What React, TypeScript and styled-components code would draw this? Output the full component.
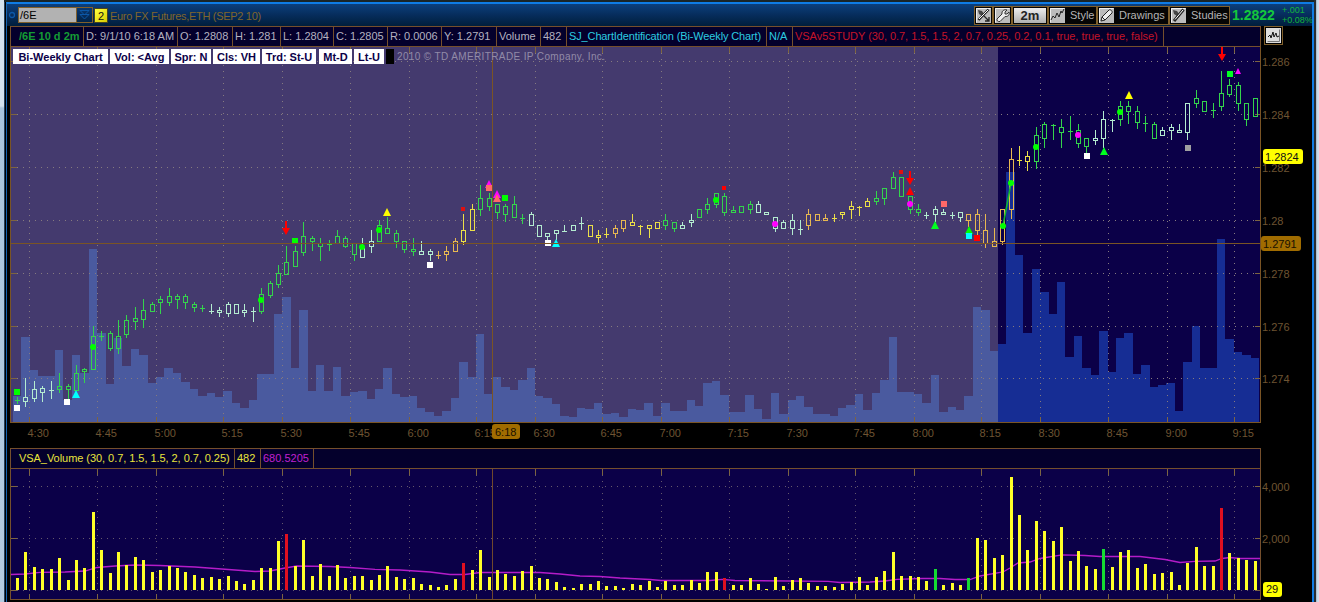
import React from "react"
import styled, { createGlobalStyle } from "styled-components"

const GlobalStyle = createGlobalStyle`
  html, body {
    margin: 0;
    background: #000;
    overflow: hidden;
  }
  body, text {
    font-family: "Liberation Sans", Arial, sans-serif;
    font-size: 11px;
  }
`

const Desktop = styled.div`
  display: grid;
  grid-template-columns: 4px 1fr 5px;
  width: 1319px;
  height: 602px;
  box-sizing: border-box;
  overflow: hidden;
`

const LeftEdge = styled.div`
  background: linear-gradient(#d4e2ee 0px, #d4e2ee 106px, #a9c4dc 108px, #b4cbe0 100%);
`

const RightEdge = styled.div`
  background: linear-gradient(90deg, #282c30 0px, #282c30 2px, #93a9c0 2px, #c4d6e6 3px, #d2e0ee 5px);
`

const Win = styled.div`
  display: flex;
  flex-direction: column;
  background: #000;
  border-top: 2px solid #182428;
  box-shadow: inset 1px 0 #24405c;
  padding-left: 2px;
`

const Inner = styled.div`
  border-top: 2px solid #0f7ce4;
  border-left: 1px solid #1464b4;
  border-right: 2px solid #0f7ce4;
  height: 598px;
`

const TitleBar = styled.div`
  display: flex;
  align-items: center;
  height: 22px;
  padding-left: 1px;
  background: linear-gradient(#0c3f7c, #062d5c 50%, #001e3c);
`

const SymbolInput = styled.div`
  display: flex;
  align-items: center;
  width: 56px;
  height: 14px;
  margin-left: 2px;
  padding-left: 1px;
  border: 1px solid #80602c;
  background: #b2b2b2;
  color: #000;
`

const DropButton = styled.div`
  width: 15px;
  height: 14px;
  border: 1px solid #80602c;
  border-left: 0;
`

const LinkBadge = styled.div`
  width: 12px;
  height: 13px;
  margin-left: 1px;
  border: 1px solid #4a4520;
  background: linear-gradient(135deg, #ffff40, #d8cc00);
  color: #111;
  line-height: 14px;
  text-align: center;
`

const Instrument = styled.div`
  margin-left: 2px;
  padding-top: 2px;
  color: #80662c;
  letter-spacing: -0.3px;
`

const Tools = styled.div`
  display: flex;
  margin-left: auto;
`

const ToolButton = styled.div<{ $w: number }>`
  display: flex;
  align-items: center;
  box-sizing: border-box;
  width: ${p => p.$w}px;
  height: 19px;
  border: 1px solid #80602c;
  background: #050505;
  color: #b4b4b4;
  svg {
    display: block;
    flex: none;
  }
  span {
    margin-left: 4px;
    white-space: nowrap;
  }
`

const Period = styled.div`
  flex: 1;
  height: 15px;
  margin: 1px;
  background: linear-gradient(#eee, #b0b0b0);
  color: #222;
  font-size: 13px;
  font-weight: bold;
  line-height: 16px;
  text-align: center;
`

const LastPrice = styled.div`
  width: 50px;
  margin-left: 2px;
  color: #14c83c;
  font-size: 14px;
  font-weight: bold;
`

const Change = styled.div`
  width: 30px;
  color: #14b43c;
  font-size: 9px;
  line-height: 10px;
  white-space: nowrap;
`

const HeaderRow = styled.div`
  display: flex;
  height: 21px;
  padding-left: 3px;
`

const InfoBar = styled.div`
  display: flex;
  box-sizing: border-box;
  width: 1251px;
  height: 21px;
  border: 1px solid #754f2c;
  background: #04002c;
`

const Cell = styled.div<{ $w: number; $color?: string; $bold?: boolean; $pad?: number; $ls?: number }>`
  box-sizing: border-box;
  width: ${p => p.$w}px;
  padding-left: ${p => p.$pad ?? 2}px;
  border-right: 1px solid #754f2c;
  color: ${p => p.$color ?? "#b4b2c0"};
  font-weight: ${p => (p.$bold ? "bold" : "normal")};
  letter-spacing: ${p => p.$ls ?? 0}px;
  line-height: 19px;
  white-space: nowrap;
`

const CornerIcon = styled.div`
  width: 17px;
  height: 17px;
  margin-left: 3px;
  border: 1px solid #80602c;
`

const ChartArea = styled.div`
  position: relative;
  height: 401px;
  padding-left: 3px;
  svg {
    display: block;
  }
`

const LowerChart = styled(ChartArea)`
  height: 133px;
`

const Badges = styled.div`
  position: absolute;
  left: 6px;
  top: 2px;
  display: flex;
  align-items: center;
`

const Badge = styled.div<{ $w: number; $ml: number }>`
  width: ${p => p.$w}px;
  height: 15px;
  margin-left: ${p => p.$ml}px;
  background: #fff;
  color: #0b0048;
  font-weight: bold;
  line-height: 16px;
  text-align: center;
  white-space: nowrap;
`

const BlackBox = styled.div`
  width: 8px;
  height: 15px;
  margin-left: 2px;
  background: #000;
`

const Copyright = styled.div`
  margin-left: 3px;
  color: #928ba8;
  font-size: 10px;
  letter-spacing: 0.37px;
  white-space: nowrap;
`

const BROWN = "#754f2c"
const AXIS = "#6e5432"
const colors: Record<string, string> = {
  g: "#34d44c",
  w: "#b4ecd0",
  y: "#ece048",
  o: "#e8b850"
}

const barX = (i: number) => Math.round(17 + i * 8.42)
const edgeX = (i: number) => Math.round(12.9 + i * 8.42)

const volumes = [
  26, 85, 52, 46, 46, 72, 22, 67, 49, 173, 89, 38, 84, 56, 73, 67, 39, 45, 54, 49,
  40, 33, 26, 29, 25, 31, 19, 14, 22, 48, 48, 108, 125, 54, 112, 31, 57, 31, 55, 26,
  30, 31, 23, 33, 54, 28, 25, 26, 14, 10, 6, 11, 24, 60, 45, 88, 28, 45, 35, 32,
  42, 54, 26, 24, 18, 6, 5, 14, 13, 19, 8, 9, 5, 13, 12, 19, 6, 19, 11, 11,
  22, 16, 39, 41, 27, 10, 10, 27, 13, 3, 29, 8, 22, 26, 15, 8, 8, 6, 14, 17,
  28, 12, 29, 42, 85, 30, 30, 28, 19, 47, 10, 15, 12, 26, 115, 112, 71, 78, 250, 167,
  89, 153, 130, 108, 140, 65, 86, 54, 47, 91, 50, 84, 89, 48, 57, 35, 37, 39, 11, 60,
  96, 54, 54, 183, 83, 70, 67, 64
]

const redBars = [32, 53, 84, 143]
const greenBars = [109, 113, 129]

// colour, high, body top, body bottom, low
const candles = `g 397 400 400 403|w 378 397 401 406|w 381 389 398 401|w 386 388 392 401|w 381 390 390 398|g 373 386 389 392|g 384 386 389 398|g 365 373 390 390|g 368 369 371 382|g 326 336 369 369
g 331 336 336 340|g 331 333 348 350|g 320 336 348 353|g 315 320 334 337|g 307 318 321 329|g 299 310 319 327|g 302 304 311 311|g 296 299 302 313|g 288 296 302 305|g 294 296 299 308
g 294 296 302 308|g 302 304 307 311|g 305 308 308 311|w 304 311 311 313|w 307 310 312 316|w 302 304 313 316|w 304 304 313 313|w 304 310 312 316|w 307 311 311 321|g 288 294 311 313
g 281 283 295 297|g 265 273 284 287|g 246 262 274 274|g 246 251 266 266|g 222 236 252 255|g 236 238 241 250|g 238 243 246 260|g 240 244 244 250|g 230 236 243 243|g 236 238 246 247
g 243 243 254 260|w 238 248 257 257|w 230 241 246 252|g 220 225 241 241|g 217 228 233 233|g 230 233 241 247|g 241 241 249 252|g 238 249 251 255|w 241 251 254 254|w 249 251 254 260
o 251 255 255 258|o 246 251 254 260|o 238 241 251 251|y 214 230 241 244|y 204 209 230 230|g 185 198 209 215|g 193 198 206 210|g 204 204 212 218|g 204 206 214 221|g 196 204 217 217
g 214 218 218 223|w 212 214 225 225|w 225 225 236 236|w 233 233 236 239|w 230 230 233 239|w 225 231 231 231|w 225 225 230 230|w 217 223 223 229|y 225 225 236 236|y 230 235 237 242
y 228 234 234 237|o 225 228 233 237|o 220 220 228 231|y 214 222 225 225|y 225 226 226 234|y 225 225 228 237|y 222 222 228 228|g 214 220 225 229|g 222 222 228 231|w 222 225 228 228
w 214 220 222 226|g 209 209 217 217|g 198 204 209 213|g 193 193 204 207|g 193 196 212 215|g 206 210 212 212|g 206 206 212 212|g 201 204 209 213|w 201 204 212 212|w 212 212 214 214
w 217 217 228 231|w 220 222 228 228|w 214 220 228 234|w 220 229 229 234|o 209 214 225 229|o 214 214 220 220|o 214 218 220 220|y 214 218 218 221|y 212 212 214 218|y 201 206 209 218
y 206 207 207 215|y 198 201 206 206|g 191 198 201 204|g 188 188 198 204|g 172 177 188 188|g 177 177 196 196|g 196 196 209 213|g 204 209 212 215|w 212 215 215 218|w 206 209 214 221
w 209 212 214 214|w 212 215 215 218|w 212 212 217 221|o 214 214 220 226|o 209 214 230 234|o 214 230 243 247|o 228 241 246 246|o 209 209 241 244|o 148 159 209 218|y 146 160 160 165
y 151 156 161 170|g 127 135 161 168|g 122 124 138 147|g 124 125 125 139|g 119 127 132 147|g 116 131 131 139|g 124 130 143 147|g 138 138 146 152|w 130 138 140 144|w 111 119 138 147
w 119 120 120 131|g 101 106 119 125|g 101 106 111 123|g 106 111 122 128|g 116 123 123 131|g 122 124 138 138|w 127 130 135 135|w 124 127 130 139|w 124 130 132 132|w 103 103 132 139
g 90 98 103 107|g 101 101 111 111|g 103 110 110 117|g 71 93 106 110|g 79 85 94 96|g 82 85 103 110|g 103 103 119 125|g 98 98 116 116`
  .split(/[|\n]/)
  .map(row => {
    const [c, ...v] = row.trim().split(" ")
    return { color: colors[c], v: v.map(Number) }
  })

type Mark = [string, number, number, string]

const markers: Mark[] = [
  ["sq", 17, 392, "#00ff00"],
  ["sq", 17, 408, "#fff"],
  ["sq", 67, 402, "#fff"],
  ["up", 76, 394, "#00ffff"],
  ["dot", 93, 347, "#00ff00"],
  ["dot", 261, 300, "#00ff00"],
  ["down", 286, 228, "#ff0000"],
  ["sq", 295, 241, "#00ff00"],
  ["dot", 362, 247, "#00ff00"],
  ["dot", 379, 230, "#00ff00"],
  ["up", 387, 212, "#ffff00"],
  ["sq", 430, 265, "#fff"],
  ["small", 463, 209, "#e01010"],
  ["up", 489, 184, "#ff00ff"],
  ["sq", 489, 188, "#ff6868"],
  ["up", 497, 194, "#ff00ff"],
  ["up", 497, 198, "#ff6868"],
  ["sq", 505, 198, "#00ff00"],
  ["sq", 548, 243, "#fff"],
  ["up", 556, 243, "#00ffff"],
  ["dot", 716, 200, "#00ff00"],
  ["small", 724, 188, "#ff0000"],
  ["dot", 775, 224, "#ff00ff"],
  ["small", 901, 172, "#e01010"],
  ["down", 910, 178, "#ff0000"],
  ["up", 910, 191, "#ff0000"],
  ["dot", 910, 204, "#ff00ff"],
  ["up", 935, 225, "#00ff20"],
  ["sq", 944, 204, "#ff6868"],
  ["up", 969, 230, "#00ff00"],
  ["sq", 969, 236, "#00ffff"],
  ["sq", 977, 238, "#ff0000"],
  ["dot", 1003, 226, "#00ff00"],
  ["dot", 1011, 183, "#00ff00"],
  ["dot", 1036, 147, "#00ff00"],
  ["dot", 1078, 135, "#ff00ff"],
  ["sq", 1087, 156, "#fff"],
  ["up", 1104, 151, "#00ff20"],
  ["dot", 1120, 112, "#00ff00"],
  ["up", 1129, 95, "#ffff00"],
  ["sq", 1188, 148, "#a0a0a0"],
  ["down", 1222, 54, "#ff0000"],
  ["sq", 1230, 74, "#00ff20"],
  ["smallUp", 1238, 71, "#ff00ff"]
]

const times: [number, string][] = [
  [29, "4:30"], [97, "4:45"], [156, "5:00"], [223, "5:15"], [282, "5:30"],
  [350, "5:45"], [409, "6:00"], [476, "6:15"], [535, "6:30"], [602, "6:45"],
  [661, "7:00"], [729, "7:15"], [788, "7:30"], [855, "7:45"], [914, "8:00"],
  [981, "8:15"], [1040, "8:30"], [1108, "8:45"], [1167, "9:00"], [1234, "9:15"]
]

const prices: [number, string][] = [
  [61, "1.286"], [114, "1.284"], [167, "1.282"], [220, "1.28"],
  [273, "1.278"], [326, "1.276"], [378, "1.274"]
]

const average =
  "11,574.5 25,574 40,572.3 65,572 85,571 97,567.5 115,566 135,565 160,565.5 195,567 235,570 255,571.5 270,571 285,568 297,566 330,566.5 350,567.5 375,569.3 400,570 430,572 450,574.5 465,574.5 480,572.5 540,572.5 560,574 580,576 600,576.5 620,578 650,579.5 661,580.5 710,580.5 722,579.3 735,580.5 828,581.3 840,582.5 870,582 885,581 897,579.3 922,578.5 940,578.5 955,579.5 970,579.5 980,576 1003,572 1010,568 1018,563 1030,562 1040,558.5 1062,554.8 1085,555.5 1100,556.5 1140,556.5 1165,559.5 1180,562.5 1195,561.3 1215,561 1222,558.5 1230,557.5 1240,558.5 1260,558.5"

function Marker({ mark }: { mark: Mark }) {
  const [kind, x, y, fill] = mark
  switch (kind) {
    case "dot":
      return <circle cx={x} cy={y} r={3} fill={fill} />
    case "up":
      return <path d={`M${x - 4} ${y + 4}L${x} ${y - 4}L${x + 4} ${y + 4}z`} fill={fill} />
    case "smallUp":
      return <path d={`M${x - 3} ${y + 3}L${x} ${y - 3}L${x + 3} ${y + 3}z`} fill={fill} />
    case "down":
      return (
        <path
          d={`M${x - 1} ${y - 7}h2v7h3L${x} ${y + 7}L${x - 4} ${y}h3z`}
          fill={fill}
        />
      )
    case "small":
      return <rect x={x - 2} y={y - 2} width={4} height={4} fill={fill} />
    default:
      return <rect x={x - 3} y={y - 3} width={6} height={6} fill={fill} />
  }
}

function Grid(props: { top: number; bottom: number; rows: number[]; stroke: string }) {
  const { top, bottom, rows, stroke } = props
  return (
    <g shapeRendering="crispEdges">
      {times.map(([x]) => (
        <g key={x} stroke={stroke}>
          <line x1={x + 0.5} x2={x + 0.5} y1={top + 6} y2={bottom - 6} strokeDasharray="1 5" />
          <path
            d={`M${x + 0.5} ${top}v6M${x + 0.5} ${bottom - 5}v5`}
            stroke="#7d6440"
          />
        </g>
      ))}
      {rows.map(y => (
        <g key={y} stroke={stroke}>
          <line x1={17} x2={1254} y1={y + 0.5} y2={y + 0.5} strokeDasharray="1 5" />
          <path d={`M11 ${y + 0.5}h6M1255 ${y + 0.5}h6`} stroke="#7d6440" />
        </g>
      ))}
    </g>
  )
}

function PriceChart() {
  return (
    <svg width={1300} height={401} viewBox="10 47 1300 401">
      <rect x={10} y={47} width={1251} height={375} fill="#0b0048" />
      <rect x={11} y={47} width={987} height={375} fill="#443a6e" />
      <g shapeRendering="crispEdges">
        {volumes.map((h, i) => (
          <rect
            key={i}
            x={edgeX(i)}
            y={422 - h}
            width={edgeX(i + 1) - edgeX(i)}
            height={h}
            fill={i < 117 ? "#4a5a9f" : "#162d94"}
          />
        ))}
      </g>
      <Grid top={47} bottom={422} rows={prices.map(p => p[0])} stroke="#857a80" />
      <g fill="none" shapeRendering="crispEdges">
        {candles.map(({ color, v: [high, top, bottom, low] }, i) => {
          const x = barX(i) + 0.5
          return (
            <g key={i} stroke={color}>
              {high < top && <path d={`M${x} ${high}V${top}`} />}
              {low > bottom && <path d={`M${x} ${bottom}V${low + 1}`} />}
              {top === bottom ? (
                <path d={`M${x - 2.5} ${top + 0.5}h5`} />
              ) : (
                <rect x={x - 2} y={top + 0.5} width={4} height={bottom - top} />
              )}
            </g>
          )
        })}
      </g>
      <path d="M1003 226L1011 183" stroke="#10b830" strokeWidth={1.5} />
      {markers.map((mark, i) => (
        <Marker key={i} mark={mark} />
      ))}
      <g shapeRendering="crispEdges" stroke="#7a5424" fill="none">
        <path d="M492.5 47V422M11 243.5H1261" />
        <path d="M10.5 47V422.5H1260.5V47" />
      </g>
      <g fill={AXIS}>
        {times.map(([x, label]) => (
          <text key={x} x={x - 1.5} y={437}>
            {label}
          </text>
        ))}
        {prices.map(([y, label]) => (
          <text key={y} x={1262} y={y + 5}>
            {label}
          </text>
        ))}
      </g>
      <rect x={492} y={424} width={28} height={15} rx={3} fill="#a06c00" />
      <text x={495} y={436} fill="#181000">6:18</text>
      <rect x={1263} y={149} width={40} height={15} rx={3} fill="#ffff00" />
      <text x={1265} y={161} fill="#111">1.2824</text>
      <rect x={1261} y={236} width={40} height={15} rx={3} fill="#a06c00" />
      <text x={1263} y={248} fill="#181000">1.2791</text>
    </svg>
  )
}

function VolumeChart() {
  return (
    <svg width={1300} height={133} viewBox="10 469 1300 133">
      <rect x={10} y={469} width={1251} height={130} fill="#0b0048" />
      <Grid top={469} bottom={599} rows={[486, 538, 590]} stroke="#64586c" />
      <polyline points={average} fill="none" stroke="#b41cc8" strokeWidth={1.3} />
      <g shapeRendering="crispEdges">
        {volumes.map((h, i) => (
          <rect
            key={i}
            x={barX(i) - 1}
            y={590 - Math.round(h / 2.22)}
            width={3}
            height={Math.round(h / 2.22)}
            fill={
              redBars.includes(i) ? "#e01020" : greenBars.includes(i) ? "#14dc32" : "#ffff28"
            }
          />
        ))}
        <path d="M492.5 469V599" stroke="#70482c" />
        <path d="M10.5 469V599.5H1260.5V469" stroke={BROWN} fill="none" />
      </g>
      <text x={1262} y={491} fill={AXIS}>4,000</text>
      <text x={1262} y={543} fill={AXIS}>2,000</text>
      <rect x={1263} y={582} width={19} height={15} rx={3} fill="#ffff00" />
      <text x={1266} y={593} fill="#111">29</text>
    </svg>
  )
}

function ToolIcon({ name }: { name: string }) {
  return (
    <svg width={17} height={17} viewBox="0 0 17 17" fill="none">
      <rect x={1} y={1} width={15} height={15} fill="#bcbcbc" />
      <path d="M1.5 15.5V1.5h14" stroke="#eee" />
      {name === "hammer" && (
        <>
          <path d="M3 3l4 1 2 3-2 2-3-2z" fill="#444" />
          <path d="M13.5 2.5L4 14" stroke="#222" strokeWidth={3} />
          <path d="M13 3L5 12.5" stroke="#fff" />
        </>
      )}
      {name === "arrow" && (
        <>
          <path d="M3 3l4 1 2 3-2 2-3-2z" fill="#444" />
          <path d="M13.5 2.5L3.5 13" stroke="#222" strokeWidth={2.5} />
          <path d="M13 3L4 12" stroke="#fff" />
          <path d="M9 9l5 5M14 10v4h-4" stroke="#222" strokeWidth={1.3} />
        </>
      )}
      {name === "wrench" && (
        <path
          d="M3 12l5-5c-.5-3 2-5 5-4l-2 2v2h2l2-2c1 3-1.5 5-4 4.5L6 14.5C4 15 2.5 13.5 3 12z"
          fill="#eee"
          stroke="#333"
        />
      )}
      {name === "line" && <path d="M2 13l2-4 2 2 2-5 2 4 2-6 1 2 2-4" stroke="#222" />}
      {name === "pencil" && (
        <path d="M3 14l1-4 7-7c1-1 4 1 3 3l-7 7zM4 10l3 3" fill="#eee" stroke="#222" />
      )}
    </svg>
  )
}

const cells: {
  text: string
  w: number
  color?: string
  bold?: boolean
  pad?: number
  ls?: number
}[] = [
  { text: "/6E 10 d 2m", w: 73, color: "#149c34", bold: true, pad: 8 },
  { text: "D: 9/1/10 6:18 AM", w: 94 },
  { text: "O: 1.2808", w: 55 },
  { text: "H: 1.281", w: 48 },
  { text: "L: 1.2804", w: 53 },
  { text: "C: 1.2805", w: 54 },
  { text: "R: 0.0006", w: 54 },
  { text: "Y: 1.2791", w: 55 },
  { text: "Volume", w: 44 },
  { text: "482", w: 26 },
  { text: "SJ_ChartIdentification (Bi-Weekly Chart)", w: 200, color: "#2ccce0", ls: -0.13 },
  { text: "N/A", w: 26, color: "#2ccce0" },
  {
    text: "VSAv5STUDY (30, 0.7, 1.5, 1.5, 2, 0.7, 0.25, 0.2, 0.1, true, true, true, false)",
    w: 371,
    color: "#c41428",
    ls: -0.04
  }
]

const badges: [string, number, number][] = [
  ["Bi-Weekly Chart", 95, 0],
  ["Vol: <Avg", 59, 2],
  ["Spr: N", 40, 2],
  ["Cls: VH", 47, 2],
  ["Trd: St-U", 54, 2],
  ["Mt-D", 33, 3],
  ["Lt-U", 30, 2]
]

const App = () => {
  return (
    <>
      <GlobalStyle />
      <Desktop>
        <LeftEdge />
        <Win>
          <Inner>
            <TitleBar>
              <svg width={8} height={8} viewBox="0 0 8 8">
                <circle cx={4} cy={4} r={2.5} fill="none" stroke="#0c58a8" strokeWidth={1.3} />
              </svg>
              <SymbolInput>/6E</SymbolInput>
              <DropButton>
                <svg width={15} height={14} viewBox="0 0 15 14" fill="none" stroke="#0c58a8">
                  <path d="M3 2.5h9L7.5 7zM3 6.5h9L7.5 11z" />
                </svg>
              </DropButton>
              <LinkBadge>2</LinkBadge>
              <Instrument>Euro FX Futures,ETH (SEP2 10)</Instrument>
              <Tools>
                <ToolButton $w={19}><ToolIcon name="arrow" /></ToolButton>
                <ToolButton $w={19}><ToolIcon name="wrench" /></ToolButton>
                <ToolButton $w={36}><Period>2m</Period></ToolButton>
                <ToolButton $w={49}><ToolIcon name="line" /><span>Style</span></ToolButton>
                <ToolButton $w={72}><ToolIcon name="pencil" /><span>Drawings</span></ToolButton>
                <ToolButton $w={61}><ToolIcon name="hammer" /><span>Studies</span></ToolButton>
              </Tools>
              <LastPrice>1.2822</LastPrice>
              <Change>+.001<br />+0.08%</Change>
            </TitleBar>
            <HeaderRow>
              <InfoBar>
                {cells.map((c, i) => (
                  <Cell key={i} $w={c.w} $color={c.color} $bold={c.bold} $pad={c.pad} $ls={c.ls}>
                    {c.text}
                  </Cell>
                ))}
              </InfoBar>
              <CornerIcon>
                <svg width={17} height={17} viewBox="0 0 17 17" fill="none">
                  <rect x={1} y={1} width={15} height={15} fill="#ddd" />
                  <path d="M2.5 14.5h12v-12" stroke="#777" />
                  <path d="M3 10l2-2 1 3 2-6 1 5 2-4 1 4 2-1" stroke="#111" />
                </svg>
              </CornerIcon>
            </HeaderRow>
            <ChartArea>
              <PriceChart />
              <Badges>
                {badges.map(([text, w, ml]) => (
                  <Badge key={text} $w={w} $ml={ml}>{text}</Badge>
                ))}
                <BlackBox />
                <Copyright>2010 © TD AMERITRADE IP Company, Inc.</Copyright>
              </Badges>
            </ChartArea>
            <HeaderRow>
              <InfoBar>
                <Cell $w={224} $color="#e8e43c" $pad={8} $ls={-0.05}>
                  VSA_Volume (30, 0.7, 1.5, 1.5, 2, 0.7, 0.25)
                </Cell>
                <Cell $w={26} $color="#e8e43c">482</Cell>
                <Cell $w={53} $color="#c020d0">680.5205</Cell>
              </InfoBar>
            </HeaderRow>
            <LowerChart>
              <VolumeChart />
            </LowerChart>
          </Inner>
        </Win>
        <RightEdge />
      </Desktop>
    </>
  )
}

export default App
